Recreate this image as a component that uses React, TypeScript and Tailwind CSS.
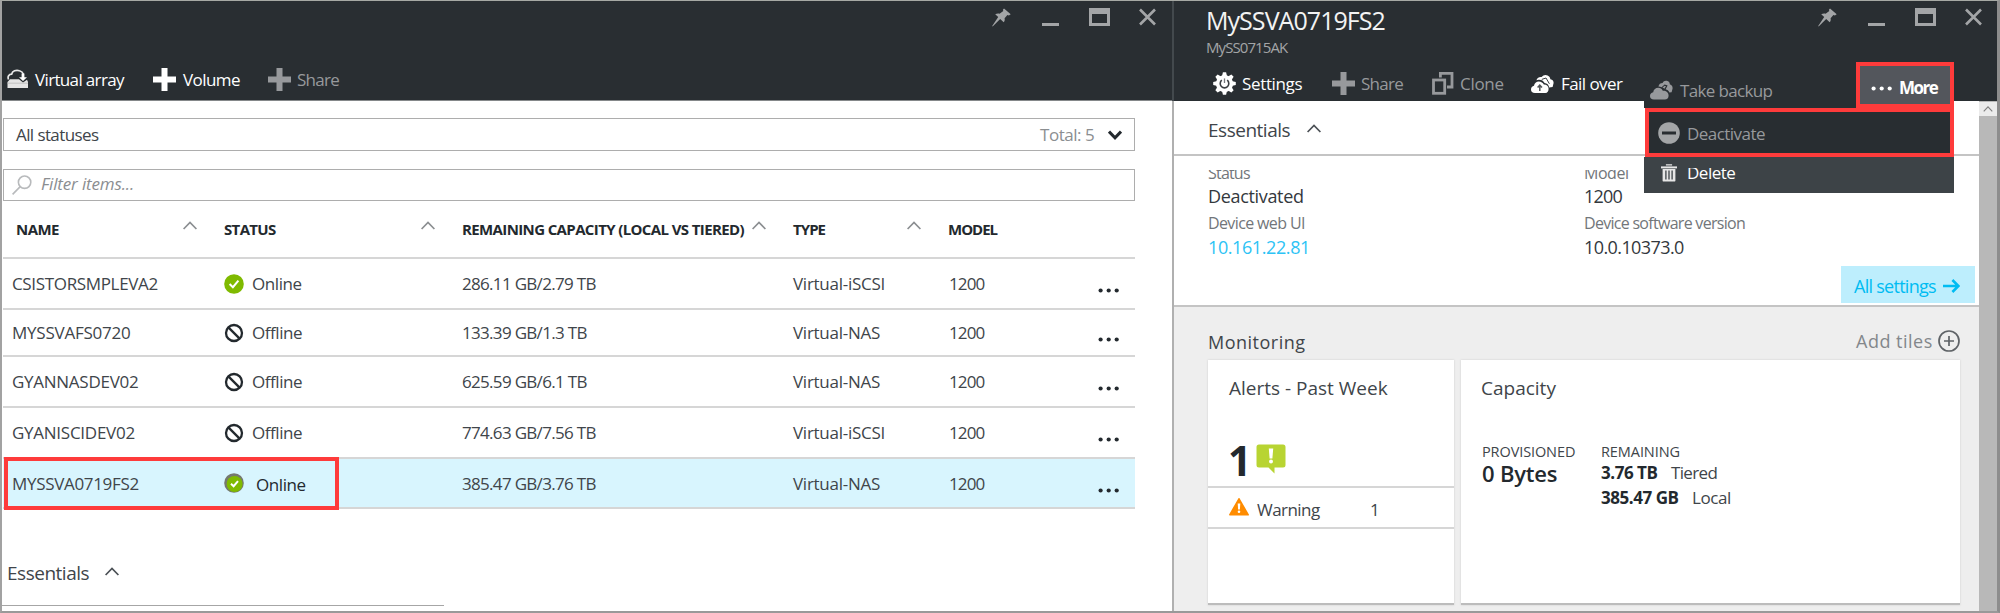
import React from "react";

type IconProps = { className?: string };

function PinIcon() {
  return (
    <svg width="19" height="19" viewBox="0 0 19 19" fill="#a3a5a7">
      <path d="M12 0.5L18.7 6.3L16.9 7.4L15.4 7L12.6 10.2C13 12 12.6 13.2 11.7 14.2L8.2 10.9L0.6 18.4L0.2 17.9L6.2 9.1L3.2 6.3C4.6 5.5 6 5.3 7.6 5.7L11.3 3L10.9 1.7Z" />
    </svg>
  );
}

function WindowButtons() {
  return (
    <div className="flex h-[19px] items-start">
      <PinIcon />
      <div className="mt-[15px] ml-[31px] h-[3px] w-[17px] bg-[#a3a5a7]" />
      <div className="ml-[30px] h-[18px] w-[21px] border-3 border-t-[6px] border-[#a3a5a7]" />
      <svg className="ml-[29px]" width="17" height="18" viewBox="0 0 17 18" fill="none" stroke="#a3a5a7" strokeWidth="2.6">
        <path d="M1 1.5L16 16.5M16 1.5L1 16.5" />
      </svg>
    </div>
  );
}

function PlusIcon({ className = "" }: IconProps) {
  return (
    <svg className={className} width="23" height="23" viewBox="0 0 23 23" fill="currentColor">
      <path d="M8.5 0H14.5V8.5H23V14.5H14.5V23H8.5V14.5H0V8.5H8.5Z" />
    </svg>
  );
}

function ArrayIcon() {
  return (
    <svg width="22" height="20" viewBox="0 0 22 20" fill="none">
      <path d="M1.5 10.5C0.3 7.6 2 5.2 4.6 5.2C5.4 2 9 0.6 12.4 1.7C14.6 2.3 15.8 3.4 16.3 5" stroke="#e8e8e8" strokeWidth="1.7" />
      <path d="M0.5 13L3 10.2H12L16 13.6L20 10.8L21 13V19H0.5Z" fill="#e4e4e4" />
      <path d="M14.6 4.6H17.4V8.2H20L16 12L12 8.2H14.6Z" fill="#fff" />
      <path d="M0.5 14.2H21" stroke="#b9b9b9" strokeWidth="0.8" />
    </svg>
  );
}

function GearIcon() {
  const teeth = [0, 45, 90, 135, 180, 225, 270, 315];
  return (
    <svg width="23" height="23" viewBox="0 0 23 23">
      <circle cx="11.5" cy="11.5" r="8.6" fill="#fff" />
      {teeth.map((a) => (
        <path key={a} d="M8.9 4.5L9.9 0.2H13.1L14.1 4.5Z" fill="#fff" transform={`rotate(${a} 11.5 11.5)`} />
      ))}
      <path d="M8.8 8.2A4.3 4.3 0 1 0 14.2 8.2" fill="none" stroke="#3b3f43" strokeWidth="1.6" />
      <path d="M11.5 6.4V11" stroke="#777a7d" strokeWidth="1.3" />
    </svg>
  );
}

function CloneIcon() {
  return (
    <svg width="22" height="23" viewBox="0 0 22 23" fill="none" stroke="#97999c" strokeWidth="2.8">
      <rect x="1.5" y="8" width="11.2" height="13.3" />
      <path d="M8.4 5.5V1.4H20V15H15" />
    </svg>
  );
}

function CloudIcon({ className = "" }: IconProps) {
  return (
    <svg className={className} width="23" height="20" viewBox="0 0 23 20" fill="currentColor">
      <path d="M4 19.5C1.3 19.5 0 17.9 0 15.9C0 13.9 1.4 12.4 3.2 12.2C3.6 9.4 5.7 7.8 8.2 7.8C10.4 7.8 12 8.9 12.8 10.7C15.8 10.4 18.6 12.4 18.6 15.4C18.6 17.8 17.2 19.5 14.8 19.5Z" />
      <path d="M8.4 6.4C9 4.2 10.4 3 12.6 3C13.4 1.2 15 0.4 16.8 0.8C18.8 1.2 19.8 2.6 19.8 4.2C21.6 4.8 22.8 6.4 22.6 8.6L21.6 12.2L19.4 12.4C18.6 10.6 17.2 9.6 15.6 9.2L17.6 5.6L14.6 4.6L11.6 7.2C10.8 6.6 9.6 6.4 8.4 6.4Z" />
      <path d="M12.4 7.6L14.8 5.8L16 6.2L14.4 8.8C13.8 8.2 13.2 7.8 12.4 7.6Z" />
    </svg>
  );
}

function FailoverIcon() {
  return (
    <svg width="23" height="20" viewBox="0 0 23 20">
      <path d="M4 19C1.3 19 0 17.4 0 15.4C0 13.4 1.4 11.9 3 11.7C3.4 9 5.3 7.4 7.8 7.4C10.2 7.4 12 8.7 12.8 10.5C15.8 10.4 17.6 12.2 17.6 14.8C17.6 17.4 16.4 19 14.4 19Z" fill="#fff" />
      <path d="M5.4 6.2C6.4 3.6 8.4 2.6 10.6 3C12.2 0.8 14.6 0.4 16.6 1.4C18.4 2.2 19.2 3.6 19.4 5.2C21.6 5.6 22.8 7.2 22.6 9L21.6 13L18.2 13.6C17.8 10.6 16 9.2 13.6 9C12.4 6.6 10 5.4 7.4 5.8Z" fill="#fff" />
      <path d="M10.8 5.4L15 4L18.4 9.8" fill="none" stroke="#3b3f43" strokeWidth="1" />
      <path d="M8.8 17V12.4M6.6 13.6L8.8 11.2L11 13.6" fill="none" stroke="#53575a" strokeWidth="1.5" />
    </svg>
  );
}

function Caret({ className = "" }: IconProps) {
  return (
    <svg className={className} width="14" height="9" viewBox="0 0 14 9" fill="none" stroke="currentColor" strokeWidth="1.7">
      <path d="M0.6 8L7 1.4L13.4 8" />
    </svg>
  );
}

function StatusIcon({ kind }: { kind: "on" | "off" | "changed" }) {
  if (kind === "off") {
    return (
      <svg width="20" height="20" viewBox="0 0 20 20" fill="none" stroke="#23292e" strokeWidth="2.3">
        <circle cx="10" cy="10" r="8" />
        <path d="M4.4 4.4L15.6 15.6" />
      </svg>
    );
  }
  return (
    <svg width="20" height="20" viewBox="0 0 20 20">
      <circle cx="10" cy="10" r="9.8" fill={kind === "changed" ? "#75796f" : "#7fba00"} />
      {kind === "changed" && <circle cx="10.6" cy="11" r="8" fill="#7fba00" />}
      <path d={kind === "changed" ? "M7 10.8L9.6 13.2L14 8.2" : "M5.6 10L8.9 13.2L14.4 6.6"} fill="none" stroke="#fff" strokeWidth="2" />
    </svg>
  );
}

function Dots({ className = "" }: IconProps) {
  return (
    <svg className={className} width="22" height="5" viewBox="0 0 22 5" fill="currentColor">
      <circle cx="2.6" cy="2.5" r="2.1" />
      <circle cx="10.7" cy="2.5" r="2.1" />
      <circle cx="18.7" cy="2.5" r="2.1" />
    </svg>
  );
}

const rows: {
  name: string;
  nameCls: string;
  status: string;
  kind: "on" | "off" | "changed";
  cap: string;
  type: string;
  cls: string;
}[] = [
  { name: "CSISTORSMPLEVA2", nameCls: "tracking-[-0.34px]", status: "Online", kind: "on", cap: "286.11 GB/2.79 TB", type: "Virtual-iSCSI", cls: "h-[51px]" },
  { name: "MYSSVAFS0720", nameCls: "tracking-[-0.23px]", status: "Offline", kind: "off", cap: "133.39 GB/1.3 TB", type: "Virtual-NAS", cls: "h-[47px]" },
  { name: "GYANNASDEV02", nameCls: "tracking-[-0.27px]", status: "Offline", kind: "off", cap: "625.59 GB/6.1 TB", type: "Virtual-NAS", cls: "h-[51px]" },
  { name: "GYANISCIDEV02", nameCls: "tracking-[-0.26px]", status: "Offline", kind: "off", cap: "774.63 GB/7.56 TB", type: "Virtual-iSCSI", cls: "h-[51px]" },
  { name: "MYSSVA0719FS2", nameCls: "tracking-[-0.32px]", status: "Online", kind: "changed", cap: "385.47 GB/3.76 TB", type: "Virtual-NAS", cls: "h-[50px] bg-[#d8f5fe]" },
];

function DeviceList() {
  return (
    <section className="flex w-[1170px] shrink-0 flex-col bg-white">
      <header className="flex h-[100px] flex-col border-b border-[#85888a] bg-[#292e32]">
        <div className="flex justify-end pt-[7px] pr-[16px]">
          <WindowButtons />
        </div>
        <div className="mt-[40px] flex h-[24px] items-center pl-[5px] text-white">
          <ArrayIcon />
          <span className="ml-[6px] w-[118px] tracking-[-0.65px]">Virtual array</span>
          <PlusIcon />
          <span className="ml-[7px] w-[85px] tracking-[-0.56px]">Volume</span>
          <PlusIcon className="text-[#97999c]" />
          <span className="ml-[6px] tracking-[-0.75px] text-[#97999c]">Share</span>
        </div>
      </header>
      <div className="flex w-[1133px] flex-col pl-px">
        <div className="mt-[17px] flex h-[33px] items-center border border-[#adadad] pr-[12px] pl-[12px]">
          <span className="grow tracking-[-0.59px]">All statuses</span>
          <span className="w-[68px] tracking-[-0.47px] text-[#8b8e91]">Total: 5</span>
          <svg width="14" height="10" viewBox="0 0 14 10" fill="none" stroke="#23292e" strokeWidth="3">
            <path d="M1 1.5L7 7.8L13 1.5" />
          </svg>
        </div>
        <div className="mt-[18px] flex h-[32px] items-center border border-[#adadad] pb-[3px] pl-[8px]">
          <svg className="mt-[3px]" width="20" height="20" viewBox="0 0 20 20" fill="none" stroke="#b8babc" strokeWidth="1.6">
            <circle cx="12.6" cy="7.2" r="6.2" />
            <path d="M8.2 11.6L0.6 19.4" />
          </svg>
          <span className="ml-[9px] tracking-[-0.14px] text-[#8b8e91] italic">Filter items...</span>
        </div>
        <div className="flex h-[58px] items-center border-b-2 border-[#d6d6d6] text-[15px] font-bold text-[#23292e]">
          <span className="w-[180px] pl-[13px] tracking-[-0.56px]">NAME</span>
          <Caret className="mb-[7px] text-[#8b8e91]" />
          <span className="ml-[27px] w-[197px] tracking-[-0.66px]">STATUS</span>
          <Caret className="mb-[7px] text-[#8b8e91]" />
          <span className="ml-[27px] w-[290px] tracking-[-0.62px]">REMAINING CAPACITY (LOCAL VS TIERED)</span>
          <Caret className="mb-[7px] text-[#8b8e91]" />
          <span className="ml-[27px] w-[114px] tracking-[-0.95px]">TYPE</span>
          <Caret className="mb-[7px] text-[#8b8e91]" />
          <span className="ml-[27px] tracking-[-1px]">MODEL</span>
        </div>
        {rows.map((r) => (
          <div key={r.name} className={"relative flex items-center border-b-2 border-[#d6d6d6] pl-[9px] " + r.cls}>
            <span className={"w-[212px] " + r.nameCls}>{r.name}</span>
            <StatusIcon kind={r.kind} />
            <span className={r.kind === "changed" ? "mt-[3px] w-[218px] pl-[12px] tracking-[-0.43px] text-[#23292e]" : "w-[218px] pl-[8px] tracking-[-0.43px]"}>
              {r.status}
            </span>
            <span className="w-[331px] tracking-[-0.69px]">{r.cap}</span>
            <span className="w-[156px] tracking-[-0.27px]">{r.type}</span>
            <span className="w-[149px] tracking-[-0.85px]">1200</span>
            <Dots className="mt-[14px] text-[#23292e]" />
            {r.kind === "changed" && <div className="absolute -top-[2px] left-[1px] h-[53px] w-[335px] border-4 border-[#fe3b3b]" />}
          </div>
        ))}
      </div>
      <div className="mt-[51px] flex h-[46px] w-[442px] items-center border-b border-[#a6a6a6] pb-[21px] pl-[5px]">
        <span className="mt-[2px] w-[98px] text-[19px] tracking-[-0.49px]">Essentials</span>
        <Caret className="-mt-[2px] text-[#4b5055]" />
      </div>
    </section>
  );
}

function MoreMenu() {
  return (
    <div className="absolute top-[61px] left-[472px] w-[310px]">
      <div className="ml-[212px] flex h-[46px] w-[98px] items-center border-[4px] border-[#fe3b3b] bg-[#53565c] pt-[8px] pl-[11px] font-bold text-white">
        <Dots className="-mt-[1px]" />
        <span className="-mt-[3px] ml-[6px] tracking-[-1.5px]">More</span>
      </div>
      <div className="-mt-[8px] h-[8px] w-[212px] bg-[#292e32]" />
      <div className="ml-px flex h-[49px] w-[309px] items-center border-[4px] border-[#fe3b3b] bg-[#282d31] pl-[9px]">
        <svg width="22" height="22" viewBox="0 0 22 22">
          <circle cx="11" cy="11" r="10.8" fill="#a3a5a7" />
          <path d="M4 11H18" stroke="#282d31" strokeWidth="3" />
        </svg>
        <span className="mt-[1px] ml-[7px] tracking-[-0.54px] text-[#97999c]">Deactivate</span>
      </div>
      <div className="flex h-[36px] items-start bg-[#3d4347] pl-[17px]">
        <svg className="mt-[7px]" width="16" height="18" viewBox="0 0 16 18" fill="none">
          <path d="M5.5 1.6V0.8H10.5V1.6" stroke="#e6e6e6" strokeWidth="1.2" />
          <path d="M0 2.4H16V4.4H0Z" fill="#e6e6e6" />
          <path d="M1.6 5H14.4V16.4Q14.4 17.6 13.2 17.6H2.8Q1.6 17.6 1.6 16.4Z" fill="#e6e6e6" />
          <path d="M4.9 6.6V15.4M8 6.6V15.4M11.1 6.6V15.4" stroke="#3d4347" strokeWidth="1.3" />
        </svg>
        <div className="mt-[11px] ml-[10px] h-[16px] overflow-hidden">
          <span className="-mt-[7px] block pr-px leading-[23px] font-medium tracking-[-0.5px] text-white">Delete</span>
        </div>
      </div>
    </div>
  );
}

function DeviceBlade() {
  return (
    <section className="relative flex grow flex-col">
      <header className="flex h-[100px] flex-col border-l-2 border-[#43494d] bg-[#292e32] text-white">
        <div className="flex h-[52px] justify-between pr-[15px] pl-[31px]">
          <div className="flex flex-col pt-[4px] pl-[1px]">
            <span className="text-[25px] leading-[30px] tracking-[-0.95px] text-[#f3f3f3]">MySSVA0719FS2</span>
            <span className="mt-[2px] text-[15px] leading-[20px] tracking-[-0.92px] text-[#a3a5a7]">MySS0715AK</span>
          </div>
          <div className="pt-[7px]">
            <WindowButtons />
          </div>
        </div>
        <div className="mt-[19px] flex h-[23px] items-center pl-[39px]">
          <GearIcon />
          <span className="ml-[6px] w-[90px] tracking-[-0.35px]">Settings</span>
          <PlusIcon className="text-[#97999c]" />
          <span className="ml-[6px] w-[71px] tracking-[-0.75px] text-[#97999c]">Share</span>
          <CloneIcon />
          <span className="ml-[6px] w-[71px] tracking-[-0.29px] text-[#97999c]">Clone</span>
          <FailoverIcon />
          <span className="ml-[7px] w-[89px] tracking-[-0.56px]">Fail over</span>
          <CloudIcon className="mt-[13px] text-[#97999c]" />
          <span className="mt-[14px] ml-[7px] tracking-[-0.66px] text-[#97999c]">Take backup</span>
        </div>
      </header>

      <div className="flex grow border-l-2 border-[#b0b0b0]">
        <div className="flex w-[805px] flex-col bg-white">
          <div className="flex h-[55px] items-center border-b-2 border-[#c4c4c4] pt-[2px] pl-[34px]">
            <span className="mt-[3px] w-[99px] text-[19px] tracking-[-0.49px]">Essentials</span>
            <Caret className="text-[#4b5055]" />
          </div>
          <div className="mt-[14px] flex h-[91px] pl-[34px] text-[18px] text-[#33383d]">
            <div className="flex w-[376px] flex-col">
              <div className="h-[10px] overflow-hidden">
                <span className="-mt-[7px] block pr-px text-[16px] leading-[20px] tracking-[-0.8px] text-[#72767a]">Status</span>
              </div>
              <span className="mt-[4px] leading-[24px] tracking-[-0.33px]">Deactivated</span>
              <span className="mt-[5px] text-[16px] leading-[20px] tracking-[-0.62px] text-[#72767a]">Device web UI</span>
              <span className="mt-[2px] leading-[24px] font-medium tracking-[-0.41px] text-[#2cc3f5]">10.161.22.81</span>
            </div>
            <div className="flex flex-col">
              <div className="h-[10px] overflow-hidden">
                <span className="-mt-[7px] block pr-px text-[16px] leading-[20px] tracking-[-0.45px] text-[#72767a]">Model</span>
              </div>
              <span className="mt-[4px] leading-[24px] tracking-[-0.79px]">1200</span>
              <span className="mt-[5px] text-[16px] leading-[20px] tracking-[-0.71px] text-[#72767a]">Device software version</span>
              <span className="mt-[2px] leading-[24px] tracking-[-0.59px]">10.0.10373.0</span>
            </div>
          </div>
          <div className="mt-[5px] ml-[667px] flex h-[37px] w-[134px] items-center bg-[#bdeefd] pt-[2px] pl-[13px] text-[18px] font-medium text-[#00bcf2]">
            <span className="w-[89px] tracking-[-0.73px]">All settings</span>
            <svg width="17" height="14" viewBox="0 0 17 14" fill="none" stroke="#00bcf2" strokeWidth="2.6">
              <path d="M0 7H15M9.4 1L15.4 7L9.4 13" />
            </svg>
          </div>

          <div className="mt-[2px] flex grow flex-col border-t-2 border-[#c4c4c4] bg-[#eeeeee] pr-[18px] pl-[34px]">
            <div className="flex h-[53px] items-start pt-[22px] text-[18px]">
              <span className="grow pt-[4px] tracking-[0.5px]">Monitoring</span>
              <span className="w-[82px] pt-[3px] tracking-[0.5px] text-[#83878b]">Add tiles</span>
              <svg className="mt-[1px] mr-[1px]" width="22" height="22" viewBox="0 0 22 22" fill="none" stroke="#5f6367" strokeWidth="1.7">
                <circle cx="11" cy="11" r="10" />
                <path d="M6 11H16M11 6V16" />
              </svg>
            </div>
            <div className="flex h-[245px] gap-[7px]">
              <div className="flex w-[246px] flex-col border-b-2 border-[#bcbcbc] bg-white shadow-[0_0_2px_#ccc]">
                <div className="flex h-[126px] flex-col pl-[21px]">
                  <span className="mt-[15px] text-[19px] leading-[26px]">Alerts - Past Week</span>
                  <div className="mt-[42px] flex h-[32px] items-start">
                    <span className="-ml-[1px] w-[26px] text-[41px] leading-[34px] font-bold text-[#23292e]">1</span>
                    <svg className="mt-[1px] ml-[2px]" width="30" height="30" viewBox="0 0 30 30">
                      <path d="M3 0.5H27Q29.5 0.5 29.5 3V21Q29.5 23.5 27 23.5H18.5V29.5L12.5 23.5H3Q0.5 23.5 0.5 21V3Q0.5 0.5 3 0.5Z" fill="#b8d432" />
                      <path d="M12.8 4.6H17.2L16.4 14.4H13.6Z" fill="#fff" />
                      <circle cx="15" cy="17.6" r="2" fill="#fff" />
                    </svg>
                  </div>
                </div>
                <div className="flex h-[43px] items-center border-y-2 border-[#d6d6d6] pl-[21px]">
                  <svg className="-mt-[2px]" width="20" height="18" viewBox="0 0 20 18">
                    <path d="M10 0.8L19.2 16.8H0.8Z" fill="#ff8c00" stroke="#ff8c00" strokeWidth="1.6" strokeLinejoin="round" />
                    <path d="M8.7 5.6H11.3L10.9 11.6H9.1Z" fill="#fff" />
                    <circle cx="10" cy="13.8" r="1.3" fill="#fff" />
                  </svg>
                  <span className="mt-[3px] ml-[8px] w-[113px] tracking-[-0.54px]">Warning</span>
                  <span className="mt-[3px]">1</span>
                </div>
              </div>
              <div className="flex w-[499px] flex-col border-b-2 border-[#bcbcbc] bg-white pl-[20px] shadow-[0_0_2px_#ccc]">
                <span className="mt-[15px] text-[19px] leading-[26px]">Capacity</span>
                <div className="mt-[41px] ml-px flex">
                  <div className="flex w-[119px] flex-col">
                    <span className="text-[14.5px] leading-[20px] font-medium tracking-[-0.1px]">PROVISIONED</span>
                    <span className="-mt-[3px] text-[22px] leading-[28px] font-semibold tracking-[-0.2px] text-[#23292e]">0 Bytes</span>
                  </div>
                  <div className="flex flex-col">
                    <span className="text-[14.5px] leading-[20px] font-medium tracking-[-0.08px]">REMAINING</span>
                    <div className="-mt-[2px] flex leading-[25px]">
                      <span className="w-[70px] font-bold tracking-[-0.46px] text-[#23292e]">3.76 TB</span>
                      <span className="tracking-[-0.64px]">Tiered</span>
                    </div>
                    <div className="flex leading-[25px]">
                      <span className="w-[91px] font-bold tracking-[-0.46px] text-[#23292e]">385.47 GB</span>
                      <span className="tracking-[-0.42px]">Local</span>
                    </div>
                  </div>
                </div>
              </div>
            </div>
          </div>
        </div>
        <div className="flex grow flex-col bg-[#b8b8b8]">
          <div className="mt-px flex h-[14px] items-center justify-center bg-[#ebebeb] text-[#7f7f7f]">
            <Caret className="h-[6px] w-[10px]" />
          </div>
        </div>
      </div>
      <MoreMenu />
    </section>
  );
}

export default function App() {
  return (
    <div className="flex h-[613px] w-[2000px] overflow-hidden border-t border-r-[3px] border-b-2 border-l-2 border-t-[#a6a9a4] border-r-[#8d8d8d] border-b-[#999999] border-l-[#a2a2a2] bg-white font-['Open_Sans','Noto_Sans',sans-serif] text-[17px] leading-none whitespace-nowrap text-[#40454a]">
      <DeviceList />
      <DeviceBlade />
    </div>
  );
}
